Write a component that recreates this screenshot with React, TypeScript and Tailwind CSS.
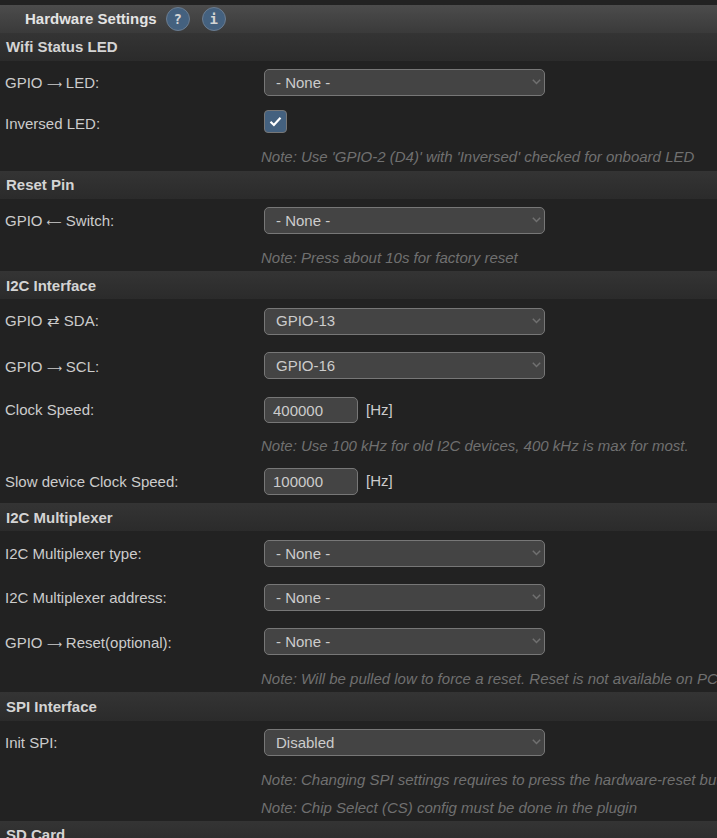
const FONT = "font-['Liberation_Sans',Arial,sans-serif]";

function Section({ title, className = "h-[28px]" }: { title: string; className?: string }) {
  return (
    <div className={`flex items-center bg-gradient-to-b from-[#343434] to-[#2b2b2b] pl-[6px] text-[15px] font-bold text-[#d4d4d4] ${className}`}>
      {title}
    </div>
  );
}

function Arrow({ glyph }: { glyph: string }) {
  return <span className="inline-block w-[15px] font-['DejaVu_Sans',sans-serif] text-[10.5px]">{glyph}</span>;
}

function Row({
  label,
  children,
  className = "h-[44px]",
  labelClass = "pt-[2px]",
}: {
  label: React.ReactNode;
  children: React.ReactNode;
  className?: string;
  labelClass?: string;
}) {
  return (
    <div className={`flex items-center ${className}`}>
      <div className={`w-[264px] shrink-0 pl-[5px] text-[15px] text-[#cccccc] ${labelClass}`}>{label}</div>
      {children}
    </div>
  );
}

function Select({ value, textClass = "pt-[2px]" }: { value: string; textClass?: string }) {
  return (
    <div className="relative h-[27px] w-[281px]">
      <select
        defaultValue={value}
        className={`h-full w-full appearance-none rounded-[5px] border border-[#777] bg-[#444] pl-[11px] text-[15px] text-[#cccccc] outline-none ${textClass}`}
      >
        <option>{value}</option>
      </select>
      <svg className="pointer-events-none absolute right-[4px] top-[10px]" width="9" height="6" viewBox="0 0 9 6" fill="none">
        <path d="M0.8 0.8l3.7 3.7L8.2 0.8" stroke="#707070" strokeWidth="1.5" />
      </svg>
    </div>
  );
}

function Num({ value, className = "h-[26px]" }: { value: string; className?: string }) {
  return (
    <>
      <input
        readOnly
        value={value}
        className={`w-[94px] rounded-[5px] border border-[#777] bg-[#444] pl-[8px] text-[15px] text-[#cccccc] outline-none ${className}`}
      />
      <span className="ml-[8px] text-[15px] text-[#cccccc]">[Hz]</span>
    </>
  );
}

function Note({ text, className = "h-[28px] pt-[3px]" }: { text: string; className?: string }) {
  return (
    <div className={`flex items-center whitespace-nowrap pl-[261px] text-[15px] italic text-[#707070] ${className}`}>
      {text}
    </div>
  );
}

function RoundIcon({ glyph }: { glyph: string }) {
  return (
    <span className="flex h-[24px] w-[24px] items-center justify-center rounded-full border border-[#6b7c8f] bg-[#44617f] font-['DejaVu_Sans_Mono',monospace] text-[14px] font-bold text-[#d4d4d4]">
      {glyph}
    </span>
  );
}

export default function App() {
  return (
    <div className={`h-[838px] w-[717px] overflow-hidden bg-[#222] ${FONT}`}>
      <div className="h-[5px]" />
      <div className="flex h-[28px] items-center bg-gradient-to-b from-[#4c4c4c] to-[#3a3a3a] pl-[25px] text-[15px] font-bold text-[#e4e4e4]">
        <span>Hardware Settings</span>
        <span className="ml-[9px] flex gap-[12px]">
          <RoundIcon glyph="?" />
          <RoundIcon glyph="i" />
        </span>
      </div>

      <Section title="Wifi Status LED" />
      <Row label={<>GPIO <Arrow glyph="⟶" /> LED:</>} className="h-[43px]"><Select value="- None -" /></Row>
      <Row label="Inversed LED:" className="h-[39px]">
        <span className="mb-[4px] flex h-[23px] w-[23px] items-center justify-center rounded-[4px] border border-[#777] bg-[#44617f] pr-[1px]">
          <svg width="13" height="11" viewBox="0 0 13 11" fill="none">
            <path d="M1.5 5.8l3.4 3.2L11.5 1.8" stroke="#fff" strokeWidth="2.2" />
          </svg>
        </span>
      </Row>
      <Note text="Note: Use 'GPIO-2 (D4)' with 'Inversed' checked for onboard LED" className="h-[28px] pt-[1px]" />

      <Section title="Reset Pin" />
      <Row label={<>GPIO <Arrow glyph="⟵" /> Switch:</>} className="h-[43px]"><Select value="- None -" /></Row>
      <Note text="Note: Press about 10s for factory reset" className="h-[29px] pt-[3px]" />

      <Section title="I2C Interface" className="h-[28px] pt-[2px]" />
      <Row label="GPIO ⇄ SDA:" labelClass=""><Select value="GPIO-13" textClass="" /></Row>
      <Row label={<>GPIO <Arrow glyph="⟶" /> SCL:</>} labelClass="pt-[4px]"><Select value="GPIO-16" /></Row>
      <Row label="Clock Speed:" className="h-[46px]" labelClass=""><Num value="400000" /></Row>
      <Note text="Note: Use 100 kHz for old I2C devices, 400 kHz is max for most." className="h-[26px]" />
      <Row label="Slow device Clock Speed:"><Num value="100000" className="h-[27px]" /></Row>

      <Section title="I2C Multiplexer" className="h-[28px] pt-[2px]" />
      <Row label="I2C Multiplexer type:"><Select value="- None -" /></Row>
      <Row label="I2C Multiplexer address:"><Select value="- None -" /></Row>
      <Row label={<>GPIO <Arrow glyph="⟶" /> Reset(optional):</>} labelClass="pt-[4px]"><Select value="- None -" /></Row>
      <Note text="Note: Will be pulled low to force a reset. Reset is not available on PCA9540." className="h-[29px] pt-[4px]" />

      <Section title="SPI Interface" className="h-[29px] pt-[2px]" />
      <Row label="Init SPI:" className="h-[43px]"><Select value="Disabled" /></Row>
      <Note text="Note: Changing SPI settings requires to press the hardware-reset button or power off-on!" className="h-[29px] pt-[3px]" />
      <Note text="Note: Chip Select (CS) config must be done in the plugin" className="h-[28px] pt-[3px]" />

      <Section title="SD Card" />
    </div>
  );
}
